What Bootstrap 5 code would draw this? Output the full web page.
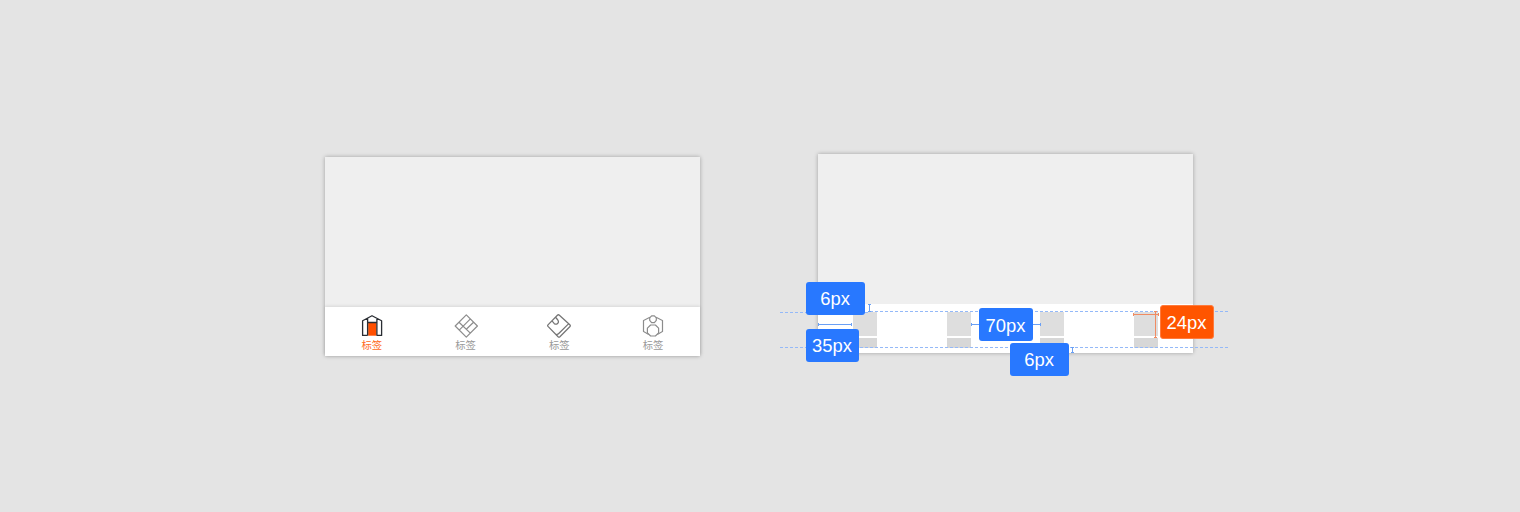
<!DOCTYPE html>
<html lang="zh-CN">
<head>
<meta charset="utf-8">
<meta name="viewport" content="width=device-width, initial-scale=1">
<title>标签栏</title>
<link href="https://cdn.jsdelivr.net/npm/bootstrap@5.3.0/dist/css/bootstrap.min.css" rel="stylesheet">
<style>
body{background:#e4e4e4;font-family:"Liberation Sans","Noto Sans CJK SC",sans-serif}
.stage{height:512px;padding:154px 0 0 325px;gap:118px}
.phone{width:375px;height:199px;background:#efefef;box-shadow:0 0 4px rgba(0,0,0,.3)}
.phone-tabs{margin-top:3px}
.tabs{height:49px;background:#fff;box-shadow:0 -1px 3px rgba(0,0,0,.1)}
.tab{padding-top:7px;color:#999;font:10.300px/14px "Noto Sans CJK SC",sans-serif}
.tab.active{color:#ff6a22}
.tab svg{display:block;width:24px;height:24px;fill:none;stroke:#8c8c8c;stroke-width:1.2}
.slots{height:49px;background:#fff;padding:8px 35px 0}
.slot{width:24px;gap:2px}
.slot i{display:block;height:24px;background:#dedede}
.slot b{display:block;height:10px;background:#d7d7d7}
.marks{inset:0;width:1520px;height:512px;fill:none;pointer-events:none}
.tag{height:33px;border-radius:3px;background:#2878ff;color:#fff;font-size:18.400px;line-height:34px;text-align:center;padding-right:1px}
.t1{left:806px;top:282px;width:59px}
.t2{left:806px;top:329px;width:53px}
.t3{left:979px;top:308px;width:54px;line-height:36px}
.t4{left:1010px;top:343px;width:59px}
.t5{left:1160px;top:305px;width:54px;height:34px;background:#ff5500;border:1px solid #ff7a3c}
</style>
</head>
<body>
<main class="stage d-flex align-items-start position-relative overflow-hidden">
  <section class="phone phone-tabs d-flex flex-column justify-content-end">
    <nav class="tabs row g-0">
      <div class="tab active col d-flex flex-column align-items-center">
        <svg viewBox="0 0 24 24"><path d="M8.200 9h8.300v12.700H8.200z" fill="#ff4f00" stroke="none"/><path d="M7.600 21.400h-5V6.800L12 1.700l9.600 5.100v14.600h-5M7.600 4.200v17.200M16.900 4.200v17.200M7.600 8.500h9.300" stroke="#2a2d33" stroke-width="1.300" stroke-linejoin="round"/></svg>
        <span>标签</span>
      </div>
      <div class="tab col d-flex flex-column align-items-center">
        <svg viewBox="0 0 24 24"><path d="M12.300 .9 23.400 12 12.300 23.100 1.200 12zM5 8.200l11.600 11.200M5.200 16.200 16.400 4.900M12.300 15.200l7.500-7.200" stroke-linejoin="round"/></svg>
        <span>标签</span>
      </div>
      <div class="tab col d-flex flex-column align-items-center">
        <svg viewBox="0 0 24 24"><path d="M10.400 1.200Q11.400 .3 12.400 1.200L22.800 10.800Q23.800 11.800 22.800 12.800L12.900 22.700Q12 23.500 11.100 22.700L1 12.400Q.3 11.600 1 10.800zM9.400 20.300Q10.600 20.700 11.500 19.800L21.500 9.900M5 6.900l2.100 2.500c2.500 2.100 5.500-.9 3.700-3.400L8.800 3.500" stroke="#747474" stroke-width="1.250"/></svg>
        <span>标签</span>
      </div>
      <div class="tab col d-flex flex-column align-items-center">
        <svg viewBox="0 0 24 24"><path d="M8.900 3.300 2.500 6.500v11l5.200 3M15.100 3.300l6.400 3.200v11l-5.200 3"/><path d="M10.600 1.800h2.800l1.900 2.100v2.400l-1.900 2.300h-2.800L8.700 6.300V3.900zM9.600 11h4.800l3.200 3.200v4.600L14.400 22H9.600l-3.200-3.200v-4.600z" stroke-linejoin="round"/></svg>
        <span>标签</span>
      </div>
    </nav>
  </section>
  <section class="phone d-flex flex-column justify-content-end">
    <div class="slots d-flex justify-content-between">
      <div class="slot d-flex flex-column"><i></i><b></b></div>
      <div class="slot d-flex flex-column"><i></i><b></b></div>
      <div class="slot d-flex flex-column"><i></i><b></b></div>
      <div class="slot d-flex flex-column"><i></i><b></b></div>
    </div>
  </section>
  <svg class="marks position-absolute" viewBox="0 0 1520 512">
    <g stroke="#94b9f8" stroke-dasharray="3 2"><path d="M780 312.500h90"/><path d="M780 347.500h448"/><path d="M870 311.500h358"/></g>
    <path d="M818.500 324.500h33M818.500 323v3M851.500 323v3M971.500 324.500h69M971.500 323v3M1040.500 323v3M869.500 304.500v7M868 304.500h3M868 311.500h3M1072.500 347.500v5M1071 347.500h3M1071 352.500h3" stroke="#6aa0f5"/>
    <path d="M1133.500 314.500h25.500M1133.500 313v3M1158.500 313v3M1155.500 311v27M1154 311.500h3M1154 337.500h3" stroke="#f08b62"/>
  </svg>
  <span class="tag t1 position-absolute">6px</span>
  <span class="tag t2 position-absolute">35px</span>
  <span class="tag t3 position-absolute">70px</span>
  <span class="tag t4 position-absolute">6px</span>
  <span class="tag t5 position-absolute">24px</span>
</main>
<script src="https://cdn.jsdelivr.net/npm/bootstrap@5.3.0/dist/js/bootstrap.bundle.min.js"></script>
</body>
</html>
